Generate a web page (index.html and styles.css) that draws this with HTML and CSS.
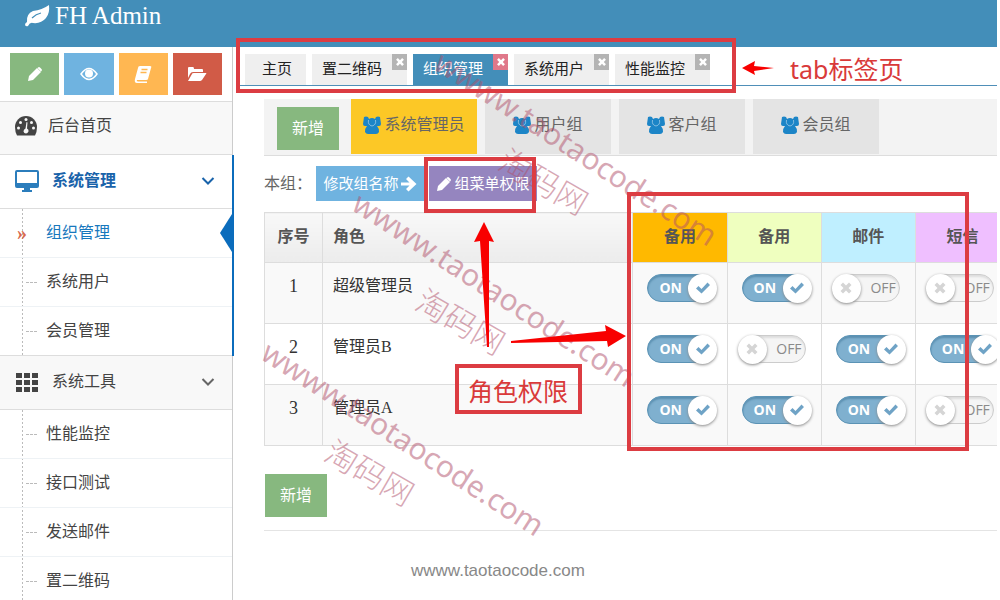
FILE: index.html
```html
<!DOCTYPE html>
<html lang="zh-CN">
<head>
    <meta charset="UTF-8">
    <meta name="viewport" content="width=device-width, initial-scale=1.0">
    <title>FH Admin</title>
    <link rel="stylesheet" href="styles.css">
</head>
<body>
    <!-- shared icons -->
    <svg class="sprite" aria-hidden="true">
        <symbol id="pencil" viewBox="0 0 16 16">
            <path d="M1 15l1-5 8-8 4 4-8 8zM11 1.500q1-1 2 0l1.500 1.500q1 1 0 2l-.5.5-3.500-3.500z"/>
        </symbol>
        <symbol id="users" viewBox="0 0 18 18">
            <path d="M1 1q2-1 4 0l1 2q3-2 6 0l1-2q2-1 4 0l1 7q0 2-2 2h-2q2 2 2 6-1 2-3 2H5q-2 0-3-2 0-4 2-6H2Q0 10 0 8z"/>
            <path d="M5.500 4q-1 5 3.500 6 4.500-1 3.500-6" fill="none" stroke="#9cc9e6" stroke-width="0.800"/>
        </symbol>
        <symbol id="check" viewBox="0 0 14 14">
            <path d="M0 7.500l2.500-2.500L5.500 8 11.500 1.500 14 4 5.500 12.500z"/>
        </symbol>
        <symbol id="cross" viewBox="0 0 14 14">
            <path d="M4 1.500l3 3 3-3L12.500 4l-3 3 3 3-2.500 2.500-3-3-3 3L1.500 10l3-3-3-3z"/>
        </symbol>
        <symbol id="down" viewBox="0 0 14 10">
            <path d="M1.500 2L7 7.500 12.500 2" fill="none" stroke="currentColor" stroke-width="2"/>
        </symbol>
    </svg>

    <header class="navbar">
        <a class="brand" href="#">
            <svg width="26" height="22" viewBox="0 0 26 22">
                <path d="M25 0q1 8-3 13-5 6-13 5-3-1-5 3-2 1-3-1 0-2 2-3-1-8 6-11 9-1 16-6z" fill="#fff"/>
                <path d="M8 13q4-4 9-5" fill="none" stroke="#438eb9" stroke-width="1.200"/>
            </svg>
            <span>FH Admin</span>
        </a>
    </header>

    <div class="page">
        <aside class="sidebar">
            <div class="shortcuts">
                <button class="green" aria-label="编辑"><svg width="16" height="16"><use href="#pencil"/></svg></button>
                <button class="blue" aria-label="查看">
                    <svg width="18" height="14" viewBox="0 0 18 14">
                        <path d="M1 7q8-11 16 0-8 11-16 0z" fill="none" stroke="#fff" stroke-width="1.500"/>
                        <circle cx="9" cy="6.500" r="4"/>
                    </svg>
                </button>
                <button class="orange" aria-label="字典">
                    <svg width="18" height="18" viewBox="0 0 18 18">
                        <path d="M6 1h10q2 0 1 2l-3 11q0 1-2 1H3q-1 1 1 1.500h9V18H3q-3 0-2-4L4 3q0-2 2-2z"/>
                        <path d="M7.500 4.500h6M6.500 7.500h6" stroke="#ffb752" stroke-width="1.300"/>
                    </svg>
                </button>
                <button class="red" aria-label="菜单">
                    <svg width="20" height="16" viewBox="0 0 20 16">
                        <path d="M1 2q0-1 1-1h4q1 0 1 2h8q1 0 1 1v2H6q-2 0-3 2l-2 4zM1 15l4-7q0-1 2-1h12q1 0 0 1l-4 6q-1 1-2 1z"/>
                    </svg>
                </button>
            </div>

            <ul class="menu">
                <li>
                    <a class="menu-item home" href="#">
                        <svg width="22" height="20" viewBox="0 0 22 20">
                            <path d="M11 0a11 11 0 0 1 11 11q0 5-2 8.500H2Q0 16 0 11A11 11 0 0 1 11 0z" fill="#444"/>
                            <g fill="#f8f8f8">
                                <circle cx="3.500" cy="12" r="1.500"/><circle cx="5.500" cy="6.500" r="1.500"/>
                                <circle cx="11" cy="3.500" r="1.500"/><circle cx="16.500" cy="6.500" r="1.500"/>
                                <circle cx="18.500" cy="12" r="1.500"/>
                                <path d="M11.500 6l1 .5-.5 6q2 1 1.500 3-1 2-2.500 2-2 0-2.500-2 0-2 2-3z"/>
                            </g>
                        </svg>
                        <span>后台首页</span>
                    </a>
                </li>
                <li class="open">
                    <a class="menu-item" href="#">
                        <svg width="24" height="22" viewBox="0 0 24 22">
                            <path d="M2 0h20q2 0 2 2v14q0 2-2 2h-7v2h2v2H7v-2h2v-2H2q-2 0-2-2V2q0-2 2-2zm0 2v11h20V2z" fill="#2b7dbc" fill-rule="evenodd"/>
                        </svg>
                        <span>系统管理</span>
                        <svg class="arrow" width="14" height="10"><use href="#down"/></svg>
                    </a>
                    <ul class="submenu">
                        <li class="active"><a href="#">组织管理</a></li>
                        <li><a href="#">系统用户</a></li>
                        <li><a href="#">会员管理</a></li>
                    </ul>
                </li>
                <li>
                    <a class="menu-item" href="#">
                        <svg width="24" height="20" viewBox="0 0 24 20">
                            <path d="M1 1h6v5H1zM9 1h6v5H9zM17 1h6v5h-6zM1 8h6v5H1zM9 8h6v5H9zM17 8h6v5h-6zM1 15h6v5H1zM9 15h6v5H9zM17 15h6v5h-6z" fill="#444"/>
                        </svg>
                        <span>系统工具</span>
                        <svg class="arrow" width="14" height="10"><use href="#down"/></svg>
                    </a>
                    <ul class="submenu">
                        <li><a href="#">性能监控</a></li>
                        <li><a href="#">接口测试</a></li>
                        <li><a href="#">发送邮件</a></li>
                        <li><a href="#">置二维码</a></li>
                    </ul>
                </li>
            </ul>
        </aside>

        <main class="main">
            <nav class="tabs">
                <div class="tab first"><a href="#">主页</a></div>
                <div class="tab"><a href="#">置二维码</a><button class="close" aria-label="关闭"><svg width="10" height="10"><use href="#cross"/></svg></button></div>
                <div class="tab current"><a href="#">组织管理</a><button class="close" aria-label="关闭"><svg width="10" height="10"><use href="#cross"/></svg></button></div>
                <div class="tab"><a href="#">系统用户</a><button class="close" aria-label="关闭"><svg width="10" height="10"><use href="#cross"/></svg></button></div>
                <div class="tab"><a href="#">性能监控</a><button class="close" aria-label="关闭"><svg width="10" height="10"><use href="#cross"/></svg></button></div>
            </nav>

            <div class="content">
                <div class="groups">
                    <button class="btn green">新增</button>
                    <a class="group selected" href="#"><svg width="18" height="18"><use href="#users"/></svg>系统管理员</a>
                    <a class="group" href="#"><svg width="18" height="18"><use href="#users"/></svg>用户组</a>
                    <a class="group" href="#"><svg width="18" height="18"><use href="#users"/></svg>客户组</a>
                    <a class="group" href="#"><svg width="18" height="18"><use href="#users"/></svg>会员组</a>
                </div>

                <div class="actions">
                    <span class="caption">本组：</span>
                    <button class="btn-small blue">修改组名称<svg width="16" height="16" viewBox="0 0 16 16"><path d="M0 6.500h8.500L5 3l2.500-2.500L15.500 8 7.500 15.500 5 13l3.500-3.500H0z"/></svg></button>
                    <button class="btn-small purple"><svg width="16" height="16"><use href="#pencil"/></svg>组菜单权限</button>
                </div>

                <table class="roles">
                    <thead>
                        <tr>
                            <th class="num">序号</th>
                            <th class="role">角色</th>
                            <th class="flag spare1">备用</th>
                            <th class="flag spare2">备用</th>
                            <th class="flag mail">邮件</th>
                            <th class="flag sms">短信</th>
                        </tr>
                    </thead>
                    <tbody>
                        <tr>
                            <td class="num">1</td>
                            <td class="role">超级管理员</td>
                            <td><label class="switch on"><input type="checkbox" checked><span class="text">ON</span><span class="knob"><svg width="14" height="14"><use href="#check"/></svg></span></label></td>
                            <td><label class="switch on"><input type="checkbox" checked><span class="text">ON</span><span class="knob"><svg width="14" height="14"><use href="#check"/></svg></span></label></td>
                            <td><label class="switch"><input type="checkbox"><span class="text">OFF</span><span class="knob"><svg width="14" height="14"><use href="#cross"/></svg></span></label></td>
                            <td><label class="switch"><input type="checkbox"><span class="text">OFF</span><span class="knob"><svg width="14" height="14"><use href="#cross"/></svg></span></label></td>
                        </tr>
                        <tr>
                            <td class="num">2</td>
                            <td class="role">管理员B</td>
                            <td><label class="switch on"><input type="checkbox" checked><span class="text">ON</span><span class="knob"><svg width="14" height="14"><use href="#check"/></svg></span></label></td>
                            <td><label class="switch"><input type="checkbox"><span class="text">OFF</span><span class="knob"><svg width="14" height="14"><use href="#cross"/></svg></span></label></td>
                            <td><label class="switch on"><input type="checkbox" checked><span class="text">ON</span><span class="knob"><svg width="14" height="14"><use href="#check"/></svg></span></label></td>
                            <td><label class="switch on"><input type="checkbox" checked><span class="text">ON</span><span class="knob"><svg width="14" height="14"><use href="#check"/></svg></span></label></td>
                        </tr>
                        <tr>
                            <td class="num">3</td>
                            <td class="role">管理员A</td>
                            <td><label class="switch on"><input type="checkbox" checked><span class="text">ON</span><span class="knob"><svg width="14" height="14"><use href="#check"/></svg></span></label></td>
                            <td><label class="switch on"><input type="checkbox" checked><span class="text">ON</span><span class="knob"><svg width="14" height="14"><use href="#check"/></svg></span></label></td>
                            <td><label class="switch on"><input type="checkbox" checked><span class="text">ON</span><span class="knob"><svg width="14" height="14"><use href="#check"/></svg></span></label></td>
                            <td><label class="switch"><input type="checkbox"><span class="text">OFF</span><span class="knob"><svg width="14" height="14"><use href="#cross"/></svg></span></label></td>
                        </tr>
                    </tbody>
                </table>

                <div class="footer-row">
                    <button class="btn green">新增</button>
                </div>
            </div>
        </main>
    </div>

    <!-- notes and watermark drawn over the page -->
    <svg class="overlay" width="1000" height="600" viewBox="0 0 1000 600">
        <g class="watermark">
            <text transform="translate(432 68) rotate(33)">wwww.taotaocode.com</text>
            <text transform="translate(350 209) rotate(33)">wwww.taotaocode.com</text>
            <text transform="translate(259 358) rotate(33)">wwww.taotaocode.com</text>
            <text class="cn" transform="translate(496 168) rotate(30)">淘码网</text>
            <text class="cn" transform="translate(413 308) rotate(30)">淘码网</text>
            <text class="cn" transform="translate(322 459) rotate(30)">淘码网</text>
        </g>
        <g class="boxes">
            <rect x="238" y="40" width="496" height="51"/>
            <rect x="426" y="159" width="108" height="52"/>
            <rect x="629" y="194" width="338" height="255"/>
            <rect x="457" y="366" width="123" height="46"/>
        </g>
        <g fill="#f80000">
            <path d="M742 68l13-7-1 5 20 2-20 3 1 4z"/>
            <path d="M484 222l10 20-5-1 0 106-2 0-7-106-6 1z"/>
            <path d="M626 336l-18 11-1-6-96 2 0-2 95-10-1-6z"/>
        </g>
        <text class="note" x="790" y="79">tab标签页</text>
        <text class="note" x="468" y="401">角色权限</text>
        <text class="site" x="411" y="576">wwww.taotaocode.com</text>
    </svg>
</body>
</html>
```
FILE: styles.css
```css
* {
    margin: 0;
    padding: 0;
    box-sizing: border-box;
}

body {
    height: 100vh;
    overflow: hidden;
    display: flex;
    flex-direction: column;
    padding-right: 3px;
    font-family: "Liberation Serif", "Noto Sans CJK SC", serif;
    font-size: 16px;
    line-height: 24px;
    color: #444;
    background: #fff;
}

a {
    color: inherit;
    text-decoration: none;
}

ul {
    list-style: none;
}

button {
    border: none;
    font: inherit;
    color: #fff;
    fill: #fff;
}

.sprite {
    position: absolute;
    width: 0;
    height: 0;
}

.green { background: #87b87f; }
.blue { background: #6fb3e0; }
.orange { background: #ffb752; }
.red { background: #d15b47; }
.purple { background: #9585bf; }

.navbar {
    flex: none;
    height: 47px;
    padding: 2px 24px;
    background: #438eb9;
}

.brand {
    display: flex;
    align-items: center;
    gap: 5px;
    color: #fff;
    font-size: 25px;
    line-height: 28px;
}

.page {
    flex: 1;
    min-height: 0;
    display: flex;
}

/* sidebar */
.sidebar {
    flex: none;
    width: 234px;
    overflow: hidden;
    background: linear-gradient(to right, transparent 232px, #ccc 232px, #ccc 233px, transparent 233px);
}

.shortcuts {
    display: grid;
    grid-template-columns: repeat(4, 1fr);
    gap: 5px;
    padding: 6px 10px 6px 10px;
    height: 55px;
    margin-right: 2px;
    border-bottom: 1px solid #ddd;
}

.shortcuts button {
    display: flex;
    align-items: center;
    justify-content: center;
}

.menu > li {
    padding-right: 2px;
}

.menu-item {
    display: flex;
    align-items: center;
    gap: 13px;
    height: 54px;
    padding: 0 17px 2px 15px;
    background: #f8f8f8;
    border-bottom: 1px solid #ddd;
}

.menu-item.home {
    height: 53px;
    padding-bottom: 4px;
    gap: 11px;
}

.arrow {
    margin-left: auto;
    color: #666;
}

.menu > li.open {
    border-right: 2px solid #0b6cbc;
    padding-right: 0;
}

.open > .menu-item {
    background: #fff;
    color: #1963aa;
    font-weight: bold;
}

.open .arrow {
    color: #1963aa;
}

.submenu {
    border-bottom: 1px solid #ddd;
    background: linear-gradient(#fff, #fff) 23px 0 / 100% 100% no-repeat, repeating-linear-gradient(to bottom, #bbb 0, #bbb 2px, #fff 2px, #fff 4px) 22px 0 / 1px 100% no-repeat;
}

.submenu li {
    position: relative;
    border-bottom: 1px solid #eef2f5;
}

.submenu li:last-child {
    border-bottom: none;
}

.submenu a {
    display: flex;
    align-items: center;
    gap: 9px;
    height: 48px;
    padding-left: 26px;
}

.submenu a::before {
    content: "";
    width: 11px;
    border-top: 1px dashed #bbb;
}

.submenu .active a {
    color: #1878bd;
    padding-left: 17px;
}

.submenu .active a::before {
    content: "»";
    width: 20px;
    border: none;
    color: #d9694b;
    font-size: 20px;
    font-weight: bold;
}

.submenu .active::after {
    content: "";
    position: absolute;
    right: 0;
    top: 5px;
    border: solid transparent;
    border-width: 19px 12px 19px 0;
    border-right-color: #0b6cbc;
}

/* page tabs */
.main {
    flex: 1;
    min-width: 0;
    overflow: hidden;
    padding: 7px 0 0 6px;
}

.tabs {
    display: flex;
    gap: 6px;
    height: 32px;
    padding-left: 5px;
    border-bottom: 1px solid #4f8fb8;
}

.tab {
    display: flex;
    width: 95px;
    padding-left: 10px;
    color: #222;
    background: #efefef;
}

.tab.first {
    width: 61px;
    padding-left: 17px;
}

.tab a {
    flex: 1;
    font-size: 15px;
    line-height: 30px;
    white-space: nowrap;
}

.tab.current {
    color: #fff;
    background: #438eb9;
}

.close {
    display: flex;
    align-items: center;
    justify-content: center;
    width: 15px;
    height: 16px;
    background: #b4b4b4;
}

.current .close {
    background: #e0788a;
}

/* content */
.content {
    padding: 13px 0 0 24px;
}

.groups {
    display: flex;
    gap: 8px;
    height: 57px;
    padding-left: 13px;
    background: #f3f3f3;
    border-bottom: 1px solid #ddd;
}

.btn {
    width: 62px;
    height: 43px;
}

.groups .btn {
    margin: 8px 4px 0 0;
}

.group {
    display: flex;
    align-items: center;
    justify-content: center;
    gap: 3px;
    width: 126px;
    height: 55px;
    padding-bottom: 3px;
    color: #666;
    background: #e4e4e4;
}

.group svg {
    fill: #1c85c7;
}

.group.selected {
    background: #fcc826;
}

.actions {
    display: flex;
    align-items: center;
    gap: 5px;
    padding: 10px 0 11px;
}

.caption {
    width: 47px;
    white-space: nowrap;
    color: #666;
}

.btn-small {
    display: flex;
    align-items: center;
    justify-content: center;
    gap: 2px;
    width: 108px;
    height: 35px;
    font-size: 15px;
    white-space: nowrap;
}

.roles {
    width: 746px;
    table-layout: fixed;
    border-collapse: collapse;
    color: #333;
}

.roles th,
.roles td {
    border: 1px solid #ddd;
    vertical-align: top;
}

.roles th {
    height: 50px;
    padding-top: 12px;
    color: #555;
    background: linear-gradient(#f8f8f8, #ececec);
}

.roles td {
    height: 61px;
    padding-top: 11px;
    text-align: center;
}

.roles tbody tr:nth-child(odd) {
    background: #f9f9f9;
}

.roles .num {
    width: 58px;
    font-size: 18px;
}

.roles th.num {
    font-size: 16px;
}

.roles .role {
    width: 310px;
    padding-left: 10px;
    text-align: left;
}

.roles .flag {
    width: 94px;
}

.roles .spare1 { background: #ffb900; }
.roles .spare2 { background: #efffbf; }
.roles .mail { background: #bfefff; }
.roles .sms { background: #efbfff; }

.switch {
    position: relative;
    display: flex;
    width: 64px;
    height: 28px;
    margin-left: 14px;
    align-items: center;
}

.switch input {
    position: absolute;
    width: 100%;
    height: 100%;
    appearance: none;
    border: 1px solid #ccc;
    border-radius: 14px;
    background: #f5f5f5;
    box-shadow: inset 0 2px 2px #ddd;
}

.switch.on input {
    border-color: #5b93b5;
    background: #7fb0cf;
    box-shadow: inset 0 2px 2px #5b8fb0;
}

.switch .text {
    position: relative;
    width: 100%;
    padding-right: 4px;
    text-align: right;
    font-family: "Open Sans", sans-serif;
    font-size: 14px;
    color: #8a8a8a;
}

.switch.on .text {
    padding-left: 12px;
    text-align: left;
    font-weight: bold;
    color: #fff;
}

.knob {
    position: absolute;
    left: -4px;
    display: flex;
    align-items: center;
    justify-content: center;
    width: 29px;
    height: 29px;
    border-radius: 50%;
    background: #fff;
    box-shadow: 0 1px 3px #888;
    fill: #d5d5d5;
}

.switch.on .knob {
    left: 41px;
    fill: #6fa3c6;
}

.footer-row {
    padding: 28px 0 13px 1px;
    border-bottom: 1px solid #e4e4e4;
}

/* notes and watermark */
.overlay {
    position: absolute;
    top: 0;
    left: 0;
    pointer-events: none;
}

.boxes rect {
    fill: none;
    stroke: #dc3c42;
    stroke-width: 4px;
}

.note {
    font-family: "Noto Sans", "Noto Sans CJK SC", sans-serif;
    font-size: 25px;
    fill: #d93a3a;
}

.watermark {
    font-family: "Noto Sans", "Noto Sans CJK SC", sans-serif;
    font-size: 30px;
    fill: #b0506a;
    fill-opacity: 0.5;
}

.watermark .cn {
    font-size: 32px;
    font-weight: 300;
}

.site {
    font-family: "Liberation Sans", sans-serif;
    font-size: 17px;
    fill: #888;
}
```
